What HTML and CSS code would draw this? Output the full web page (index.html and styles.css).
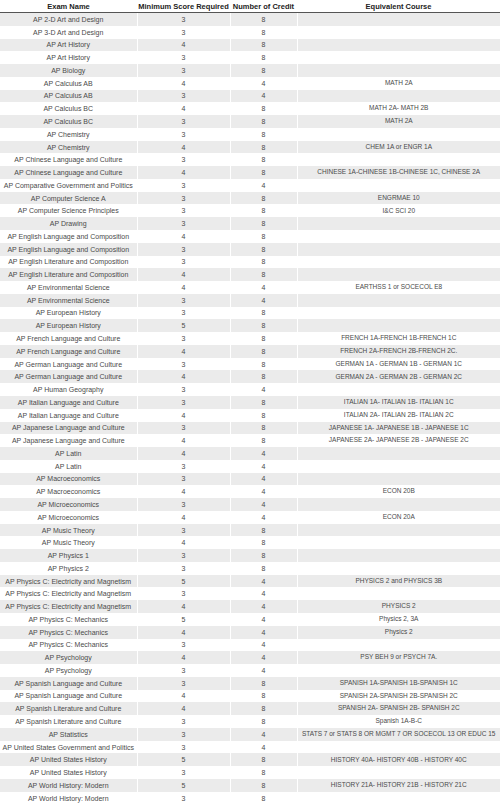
FILE: index.html
```html
<!DOCTYPE html>
<html lang="en">
<head>
<meta charset="utf-8">
<title>AP Exam Credit</title>
<link rel="stylesheet" href="styles.css">
</head>
<body>
<table class="credit-table">
  <colgroup>
    <col class="col-name">
    <col class="col-score">
    <col class="col-credit">
    <col class="col-course">
  </colgroup>
  <thead>
    <tr><th>Exam Name</th><th>Minimum Score Required</th><th>Number of Credit</th><th>Equivalent Course</th></tr>
  </thead>
  <tbody>
    <tr><td>AP 2-D Art and Design</td><td>3</td><td>8</td><td></td></tr>
    <tr><td>AP 3-D Art and Design</td><td>3</td><td>8</td><td></td></tr>
    <tr><td>AP Art History</td><td>4</td><td>8</td><td></td></tr>
    <tr><td>AP Art History</td><td>3</td><td>8</td><td></td></tr>
    <tr><td>AP Biology</td><td>3</td><td>8</td><td></td></tr>
    <tr><td>AP Calculus AB</td><td>4</td><td>4</td><td>MATH 2A</td></tr>
    <tr><td>AP Calculus AB</td><td>3</td><td>4</td><td></td></tr>
    <tr><td>AP Calculus BC</td><td>4</td><td>8</td><td>MATH 2A- MATH 2B</td></tr>
    <tr><td>AP Calculus BC</td><td>3</td><td>8</td><td>MATH 2A</td></tr>
    <tr><td>AP Chemistry</td><td>3</td><td>8</td><td></td></tr>
    <tr><td>AP Chemistry</td><td>4</td><td>8</td><td>CHEM 1A or ENGR 1A</td></tr>
    <tr><td>AP Chinese Language and Culture</td><td>3</td><td>8</td><td></td></tr>
    <tr><td>AP Chinese Language and Culture</td><td>4</td><td>8</td><td>CHINESE 1A-CHINESE 1B-CHINESE 1C, CHINESE 2A</td></tr>
    <tr><td>AP Comparative Government and Politics</td><td>3</td><td>4</td><td></td></tr>
    <tr><td>AP Computer Science A</td><td>3</td><td>8</td><td>ENGRMAE 10</td></tr>
    <tr><td>AP Computer Science Principles</td><td>3</td><td>8</td><td>I&amp;C SCI 20</td></tr>
    <tr><td>AP Drawing</td><td>3</td><td>8</td><td></td></tr>
    <tr><td>AP English Language and Composition</td><td>4</td><td>8</td><td></td></tr>
    <tr><td>AP English Language and Composition</td><td>3</td><td>8</td><td></td></tr>
    <tr><td>AP English Literature and Composition</td><td>3</td><td>8</td><td></td></tr>
    <tr><td>AP English Literature and Composition</td><td>4</td><td>8</td><td></td></tr>
    <tr><td>AP Environmental Science</td><td>4</td><td>4</td><td>EARTHSS 1 or SOCECOL E8</td></tr>
    <tr><td>AP Environmental Science</td><td>3</td><td>4</td><td></td></tr>
    <tr><td>AP European History</td><td>3</td><td>8</td><td></td></tr>
    <tr><td>AP European History</td><td>5</td><td>8</td><td></td></tr>
    <tr><td>AP French Language and Culture</td><td>3</td><td>8</td><td>FRENCH 1A-FRENCH 1B-FRENCH 1C</td></tr>
    <tr><td>AP French Language and Culture</td><td>4</td><td>8</td><td>FRENCH 2A-FRENCH 2B-FRENCH 2C.</td></tr>
    <tr><td>AP German Language and Culture</td><td>3</td><td>8</td><td>GERMAN 1A - GERMAN 1B - GERMAN 1C</td></tr>
    <tr><td>AP German Language and Culture</td><td>4</td><td>8</td><td>GERMAN 2A - GERMAN 2B - GERMAN 2C</td></tr>
    <tr><td>AP Human Geography</td><td>3</td><td>4</td><td></td></tr>
    <tr><td>AP Italian Language and Culture</td><td>3</td><td>8</td><td>ITALIAN 1A- ITALIAN 1B- ITALIAN 1C</td></tr>
    <tr><td>AP Italian Language and Culture</td><td>4</td><td>8</td><td>ITALIAN 2A- ITALIAN 2B- ITALIAN 2C</td></tr>
    <tr><td>AP Japanese Language and Culture</td><td>3</td><td>8</td><td>JAPANESE 1A- JAPANESE 1B - JAPANESE 1C</td></tr>
    <tr><td>AP Japanese Language and Culture</td><td>4</td><td>8</td><td>JAPANESE 2A- JAPANESE 2B - JAPANESE 2C</td></tr>
    <tr><td>AP Latin</td><td>4</td><td>4</td><td></td></tr>
    <tr><td>AP Latin</td><td>3</td><td>4</td><td></td></tr>
    <tr><td>AP Macroeconomics</td><td>3</td><td>4</td><td></td></tr>
    <tr><td>AP Macroeconomics</td><td>4</td><td>4</td><td>ECON 20B</td></tr>
    <tr><td>AP Microeconomics</td><td>3</td><td>4</td><td></td></tr>
    <tr><td>AP Microeconomics</td><td>4</td><td>4</td><td>ECON 20A</td></tr>
    <tr><td>AP Music Theory</td><td>3</td><td>8</td><td></td></tr>
    <tr><td>AP Music Theory</td><td>4</td><td>8</td><td></td></tr>
    <tr><td>AP Physics 1</td><td>3</td><td>8</td><td></td></tr>
    <tr><td>AP Physics 2</td><td>3</td><td>8</td><td></td></tr>
    <tr><td>AP Physics C: Electricity and Magnetism</td><td>5</td><td>4</td><td>PHYSICS 2 and PHYSICS 3B</td></tr>
    <tr><td>AP Physics C: Electricity and Magnetism</td><td>3</td><td>4</td><td></td></tr>
    <tr><td>AP Physics C: Electricity and Magnetism</td><td>4</td><td>4</td><td>PHYSICS 2</td></tr>
    <tr><td>AP Physics C: Mechanics</td><td>5</td><td>4</td><td>Physics 2, 3A</td></tr>
    <tr><td>AP Physics C: Mechanics</td><td>4</td><td>4</td><td>Physics 2</td></tr>
    <tr><td>AP Physics C: Mechanics</td><td>3</td><td>4</td><td></td></tr>
    <tr><td>AP Psychology</td><td>4</td><td>4</td><td>PSY BEH 9 or PSYCH 7A.</td></tr>
    <tr><td>AP Psychology</td><td>3</td><td>4</td><td></td></tr>
    <tr><td>AP Spanish Language and Culture</td><td>3</td><td>8</td><td>SPANISH 1A-SPANISH 1B-SPANISH 1C</td></tr>
    <tr><td>AP Spanish Language and Culture</td><td>4</td><td>8</td><td>SPANISH 2A-SPANISH 2B-SPANISH 2C</td></tr>
    <tr><td>AP Spanish Literature and Culture</td><td>4</td><td>8</td><td>SPANISH 2A- SPANISH 2B- SPANISH 2C</td></tr>
    <tr><td>AP Spanish Literature and Culture</td><td>3</td><td>8</td><td>Spanish 1A-B-C</td></tr>
    <tr><td>AP Statistics</td><td>3</td><td>4</td><td>STATS 7 or STATS 8 OR MGMT 7 OR SOCECOL 13 OR EDUC 15</td></tr>
    <tr><td>AP United States Government and Politics</td><td>3</td><td>4</td><td></td></tr>
    <tr><td>AP United States History</td><td>5</td><td>8</td><td>HISTORY 40A- HISTORY 40B - HISTORY 40C</td></tr>
    <tr><td>AP United States History</td><td>3</td><td>8</td><td></td></tr>
    <tr><td>AP World History: Modern</td><td>5</td><td>8</td><td>HISTORY 21A- HISTORY 21B - HISTORY 21C</td></tr>
    <tr><td>AP World History: Modern</td><td>3</td><td>8</td><td></td></tr>
  </tbody>
</table>
</body>
</html>
```

FILE: styles.css
```css
html, body {
  margin: 0;
  padding: 0;
  background: #ffffff;
}

.credit-table {
  width: 500px;
  table-layout: fixed;
  border-collapse: collapse;
  font-family: "Liberation Sans", Arial, sans-serif;
  font-size: 7px;
  color: #4a4a4a;
}

.col-name { width: 137px; }
.col-score { width: 93px; }
.col-credit { width: 67px; }
.col-course { width: 203px; }

.credit-table th {
  height: 12px;
  padding: 0;
  font-size: 7.5px;
  font-weight: bold;
  color: #222222;
  text-align: center;
  white-space: nowrap;
  border-bottom: 1.5px solid #555555;
}

.credit-table td {
  height: 12.78px;
  padding: 0;
  text-align: center;
  white-space: nowrap;
  line-height: 1;
  border-left: 1px solid #ffffff;
}

.credit-table td:first-child {
  border-left: none;
}

.credit-table td:last-child {
  font-size: 6.5px;
}

.credit-table tbody tr:nth-child(odd) td {
  background: #ebebeb;
}
```
